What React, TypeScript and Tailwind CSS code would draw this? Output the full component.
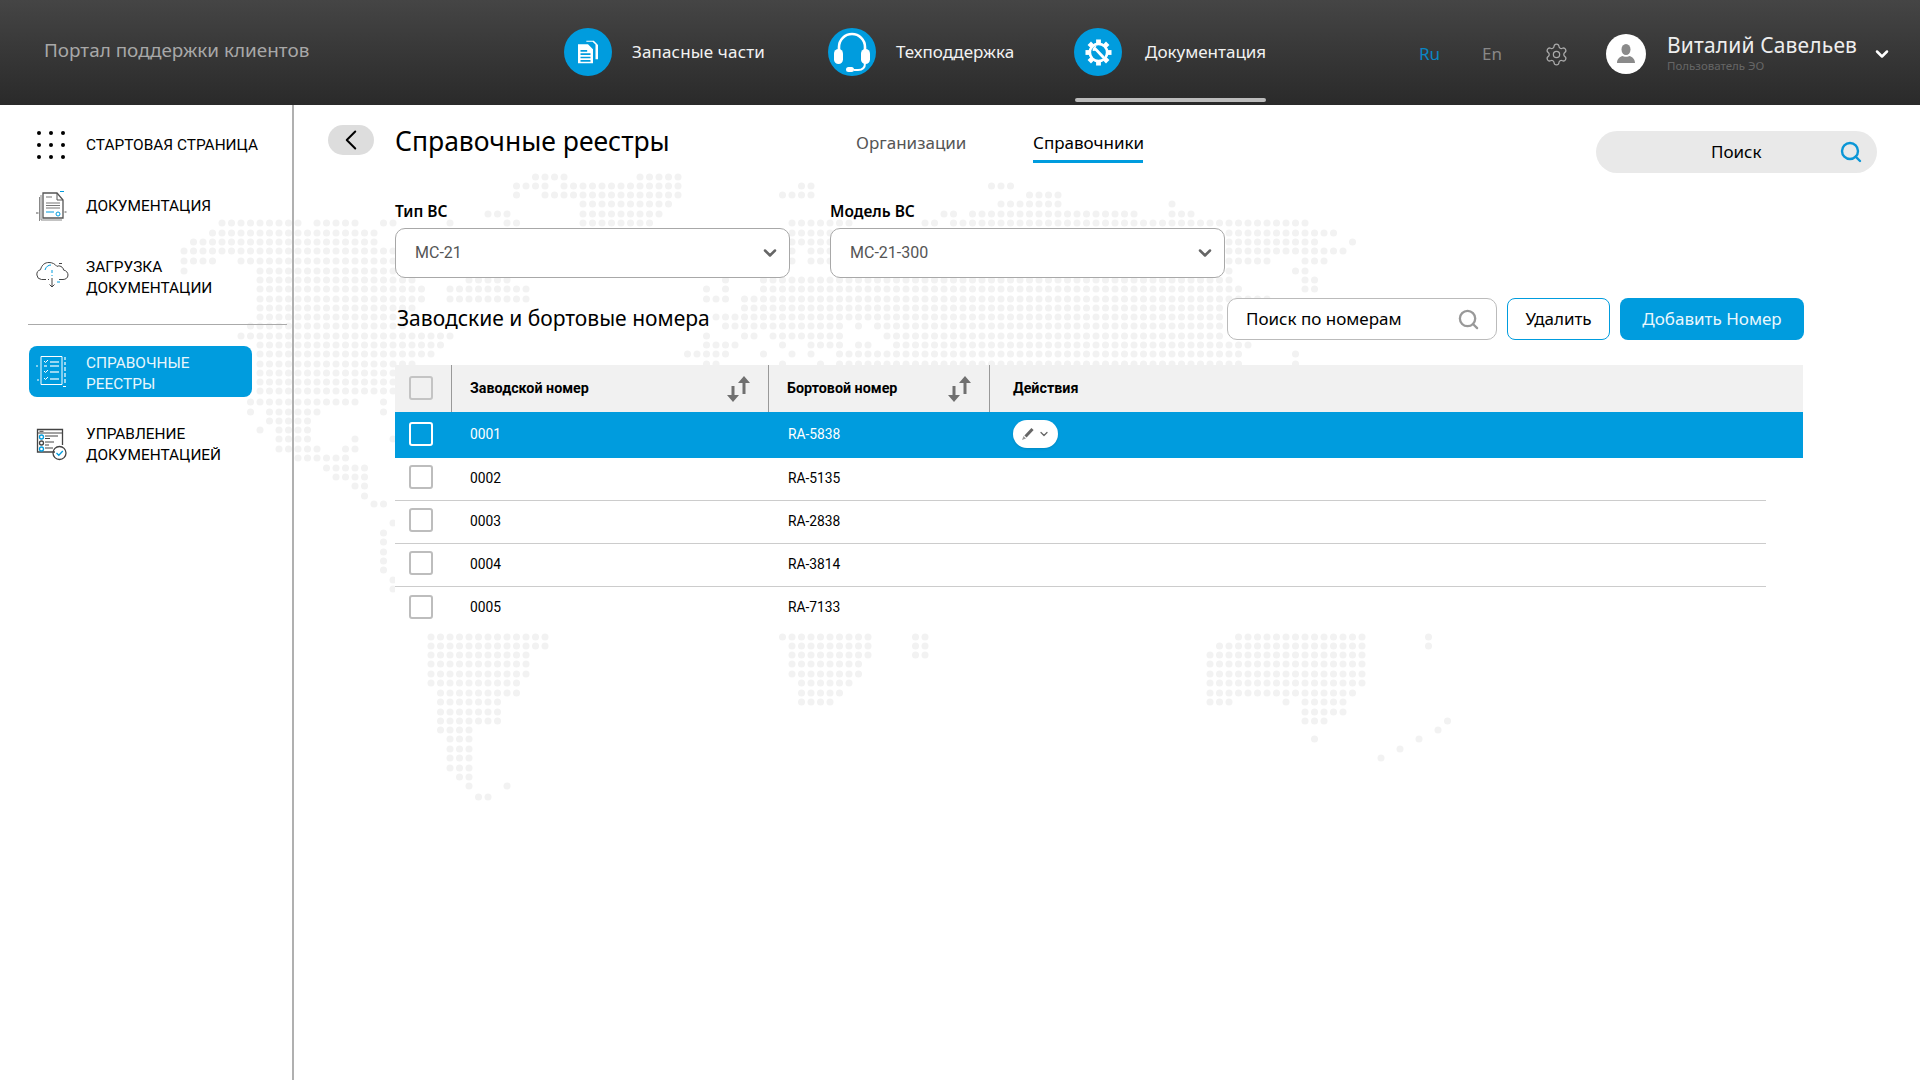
import { ChevronDown, ChevronLeft, Search, Settings } from "lucide-react";

const BLUE = "#009cde";

// y, then pairs of x start / x end of each run of dots
const MAP_ROWS: number[][] = [
  [177, 533, 571, 637, 684],
  [186, 514, 544, 561, 684, 805, 815, 993, 1014],
  [195, 514, 514, 542, 684, 785, 815, 1029, 1062],
  [204, 579, 674, 1002, 1062, 1173, 1173],
  [214, 486, 506, 579, 664, 947, 956, 974, 1136, 1173, 1192],
  [223, 221, 299, 316, 356, 384, 394, 449, 449, 504, 524, 579, 656, 796, 851, 928, 937, 955, 1307],
  [233, 212, 378, 796, 1333],
  [242, 194, 376, 796, 1314, 1351, 1351],
  [251, 184, 235, 241, 395, 796, 796, 813, 1343],
  [261, 184, 215, 241, 395, 796, 796, 813, 1268, 1303, 1324],
  [271, 186, 186, 261, 395, 1230, 1230, 1295, 1305],
  [280, 261, 413, 467, 508, 722, 722, 767, 1230, 1305, 1314],
  [289, 261, 423, 449, 526, 702, 712, 730, 730, 767, 1240, 1305, 1314],
  [299, 261, 423, 449, 526, 702, 702, 720, 730, 749, 1268],
  [308, 261, 413, 740, 1225],
  [317, 261, 405, 720, 1225],
  [326, 251, 405, 730, 843, 861, 861, 880, 1222],
  [336, 241, 453, 702, 712, 740, 759, 777, 777, 787, 843, 889, 1222],
  [345, 261, 443, 702, 741, 787, 787, 815, 843, 861, 870, 899, 1249],
  [354, 261, 433, 692, 731, 767, 767, 796, 796, 815, 815, 842, 1238, 1293, 1293],
  [364, 261, 414, 702, 722, 786, 786, 825, 825, 842, 1238, 1294, 1294],
  [373, 261, 395],
  [382, 261, 395],
  [391, 261, 395],
  [402, 251, 358, 384, 384],
  [412, 251, 251, 271, 320, 384, 384],
  [421, 271, 310],
  [430, 261, 261, 279, 310],
  [439, 279, 310, 354, 354, 393, 393],
  [449, 279, 320, 344, 354],
  [458, 299, 348],
  [468, 326, 366],
  [477, 336, 366],
  [486, 356, 366],
  [496, 366, 366],
  [504, 374, 391],
  [523, 391, 391],
  [533, 382, 391],
  [542, 382, 391],
  [552, 382, 391],
  [561, 382, 391],
  [570, 382, 391],
  [580, 391, 391],
  [589, 391, 391],
  [637, 429, 553, 786, 872, 919, 928, 1236, 1361, 1426, 1426],
  [646, 429, 553, 796, 872, 919, 928, 1219, 1361, 1433, 1433],
  [655, 429, 525, 796, 872, 919, 928, 1209, 1370],
  [664, 429, 525, 796, 862, 1209, 1370],
  [674, 429, 525, 796, 862, 1209, 1370],
  [683, 429, 516, 806, 853, 1209, 1370],
  [693, 440, 516, 806, 843, 1209, 1360],
  [702, 440, 505, 806, 834, 1209, 1228, 1284, 1284, 1303, 1351],
  [712, 440, 497, 1303, 1342],
  [721, 440, 497, 1303, 1332, 1443, 1443],
  [730, 440, 477, 1434, 1434],
  [739, 449, 468, 1312, 1312, 1415, 1415],
  [749, 449, 468, 1396, 1406],
  [758, 449, 468, 1379, 1387],
  [768, 449, 477],
  [777, 459, 468],
  [786, 468, 468, 505, 505],
  [797, 477, 487],
];

function DotMap() {
  const dots: [number, number][] = [];
  for (const row of MAP_ROWS) {
    for (let i = 1; i < row.length; i += 2) {
      const start = 184 + Math.round((row[i] - 184) / 9.5) * 9.5;
      dots.push([start, row[0]]);
      for (let x = start + 9.5; x <= row[i + 1] + 1; x += 9.5) dots.push([x, row[0]]);
    }
  }
  return (
    <svg className="absolute left-0 top-0 z-0" width="1920" height="1080">
      {dots.map(([x, y], i) => (
        <circle key={i} cx={x} cy={y} r="3.500" fill="#f2f2f2" />
      ))}
    </svg>
  );
}

function PartsIcon() {
  return (
    <svg width="22" height="25" viewBox="0 0 26 30" fill="white">
      <path d="M11 1h9l5 5v17h-3V5.500L18.500 2H11z" />
      <path fillRule="evenodd" d="M1 5h12l6 6v17H1zM4 12v2h8v-2zM4 16v2h12v-2zM4 20v2h12v-2zM4 24v2h12v-2z" />
    </svg>
  );
}

function HeadsetIcon() {
  return (
    <svg width="40" height="44" viewBox="0 0 40 44" fill="none">
      <path d="M7 23v-6a13 13 0 0 1 26 0v6" stroke="white" strokeWidth="2.600" />
      <rect x="2" y="19" width="9" height="15" rx="4.500" fill="white" />
      <rect x="29" y="19" width="9" height="15" rx="4.500" fill="white" />
      <path d="M33 33c0 5-3 7-7 7h-4" stroke="white" strokeWidth="2" />
      <rect x="14" y="37" width="8" height="5" rx="2.500" fill="white" />
    </svg>
  );
}

function ToolGearIcon() {
  const teeth = [0, 45, 90, 135, 180, 225, 270, 315];
  return (
    <svg width="27" height="27" viewBox="0 0 28 28" fill="none">
      <circle cx="14" cy="14" r="9" stroke="white" strokeWidth="2.800" />
      {teeth.map((a) => (
        <rect key={a} x="11.500" y="0.500" width="5" height="4.500" fill="white" transform={`rotate(${a} 14 14)`} />
      ))}
      <path d="M11 10.500l7.500 8" stroke="white" strokeWidth="3" strokeLinecap="round" />
      <path d="M8 12.500a4.500 4.500 0 0 1 4-5.500l-1.500 3 2 2z" fill="white" />
    </svg>
  );
}

function DotsIcon() {
  const cells = [0, 1, 2, 3, 4, 5, 6, 7, 8];
  return (
    <div className="grid grid-cols-3 gap-x-[8px] gap-y-[8px] w-[28px] ml-[2px]">
      {cells.map((c) => (
        <span key={c} className="w-[4px] h-[4px] rounded-full bg-black mx-auto" />
      ))}
    </div>
  );
}

function DocIcon() {
  return (
    <svg width="32" height="32" viewBox="0 0 32 32" fill="none" stroke="#555" strokeWidth="1" className="ml-[1px]">
      <path d="M7 3h14l6 7v18H7z" strokeWidth="1.300" />
      <path d="M5 5v25h21M3.500 7v24" stroke="#888" />
      <path d="M21 3v7h6" />
      <path d="M10 7h6M10 13h14M10 15.500h14M10 18h14" stroke="#777" strokeWidth="1.200" />
      <path d="M10 22h8M24 1.500h4" stroke={BLUE} />
      <circle cx="22" cy="24" r="2" stroke={BLUE} />
      <path d="M0 23h2.500M28.500 22h2" stroke="#555" />
    </svg>
  );
}

function CloudIcon() {
  return (
    <svg width="34" height="28" viewBox="0 0 34 28" fill="none" stroke="#444" strokeWidth="1" className="-mt-[6px]">
      <path d="M11 18.500H6.500a5 5 0 0 1-1-9.800C7 3.500 10 1.500 14 1.500c3.500 0 6 1.500 8 4 1-.8 2.500-.8 4 0 1.500.8 2.500 2 2.500 3.500 2.800.5 4.500 2.800 4.500 5 0 3-2.500 4.500-5 4.500h-4" />
      <path d="M10 9c1-3.500 3.500-5 6-5" stroke={BLUE} />
      <path d="M17 9v3M17 14v1" stroke={BLUE} />
      <path d="M17 17v9M14.500 23.500l2.500 2.500 2.500-2.500" />
      <path d="M14 18.500h-1" />
      <path d="M22 21h3" stroke={BLUE} />
      <path d="M24 2.500h3" />
    </svg>
  );
}

function ListIcon() {
  return (
    <svg width="34" height="34" viewBox="0 0 34 34" fill="none" stroke="white" strokeWidth="1">
      <path d="M6 1.500h21v28H6z" />
      <path d="M30 2v3M30 7v3M30 12v4M30 18v4M30 24v4M28 31.500h3M1 11h2M2 25h2" strokeWidth="1.200" />
      <path d="M9 6l1.500 1.500L13 5M9 16l1.500 1.500L13 15M9 23l1.500 1.500L13 22" />
      <path d="M15 7h9M15 11h9M15 17h9M15 24h9M9 11h3" strokeWidth="1.400" opacity="0.800" />
    </svg>
  );
}

function ManageIcon() {
  return (
    <svg width="32" height="34" viewBox="0 0 32 34" fill="none" stroke="#444" strokeWidth="1.300">
      <path d="M20 24H2.500V1.500h25V17" />
      <path d="M2.500 5h25M4.500 3.300h4" strokeWidth="1" />
      <circle cx="6.500" cy="9" r="2" stroke={BLUE} />
      <circle cx="6.500" cy="15" r="2" />
      <circle cx="6.500" cy="21" r="2" stroke={BLUE} />
      <path d="M10 8h13M10 10.500h5M10 14h9M10 17h4M10 20h8" strokeWidth="1" />
      <circle cx="24.500" cy="25" r="6.500" />
      <path d="M21.500 25l2.300 2.300 4-4.300" stroke={BLUE} />
    </svg>
  );
}

function UserIcon() {
  return (
    <svg width="20" height="22" viewBox="0 0 20 22" fill="#8a8a8a">
      <ellipse cx="10" cy="6.500" rx="4.500" ry="5.500" />
      <path d="M1 20c0-4.500 3.500-6.500 5.500-7 1 1 6 1 7 0 2 .5 5.500 2.500 5.500 7z" />
    </svg>
  );
}

function SortIcon() {
  return (
    <svg width="24" height="26" viewBox="0 0 24 26" fill="#707070">
      <path d="M17 0l6 7h-4.500v11h-3V7H11z" />
      <path d="M6 26l-6-7h4.500V10h3v9H12z" />
    </svg>
  );
}

function PencilIcon() {
  return (
    <svg width="14" height="14" viewBox="0 0 14 14" fill="none">
      <path d="M4.500 9.500L11.500 2" stroke="#666" strokeWidth="3" />
      <path d="M1 13l1.500-4 2.500 2.500z" fill="#999" />
    </svg>
  );
}

function NavItem({ icon, label, width }: { icon: React.ReactNode; label: string; width: string }) {
  return (
    <div className={`flex items-center ${width}`}>
      <div className="w-[48px] h-[48px] rounded-full bg-[#009cde] flex items-center justify-center shrink-0">{icon}</div>
      <span className="text-[17px] text-[#f2f2f2] whitespace-nowrap">{label}</span>
    </div>
  );
}

function Header() {
  return (
    <header className="relative h-[105px] bg-linear-to-b from-[#454545] to-[#2a2a2a] flex items-center">
      <div className="w-[564px] pl-[44px] text-[18.900px] text-[#a8a8a8] -mt-[5px]">Портал поддержки клиентов</div>
      <div className="w-[264px] -mt-[1px]">
        <NavItem icon={<PartsIcon />} label="Запасные части" width="gap-[20px] tracking-[0.150px]" />
      </div>
      <div className="w-[246px] -mt-[1px]">
        <NavItem icon={<HeadsetIcon />} label="Техподдержка" width="gap-[20px]" />
      </div>
      <div className="w-[345px] -mt-[1px]">
        <NavItem icon={<ToolGearIcon />} label="Документация" width="gap-[23px]" />
      </div>
      <span className="absolute left-[1075px] top-[98px] w-[191px] h-[4px] rounded-sm bg-[#bbbbbb]" />
      <span className="text-[17px] text-[#0b86c4] w-[63px] mt-[3px]">Ru</span>
      <span className="text-[17px] text-[#888888] w-[62px] mt-[3px]">En</span>
      <Settings size={25} strokeWidth={1.200} className="text-[#aaaaaa] mt-[3px]" />
      <div className="ml-[37px] w-[40px] h-[40px] rounded-full bg-white flex items-center justify-center mt-[2px]">
        <UserIcon />
      </div>
      <div className="ml-[21px] w-[207px] mt-[1px]">
        <div className="text-[21px] leading-[25px] tracking-[0.150px] text-[#eeeeee] whitespace-nowrap">Виталий Савельев</div>
        <div className="text-[11.500px] leading-[14px] mt-[1px] text-[#666666]">Пользователь ЭО</div>
      </div>
      <ChevronDown size={20} strokeWidth={3} className="text-white ml-[-2px] mt-[3px]" />
    </header>
  );
}

function SideItem({ icon, children, active, className }: { icon: React.ReactNode; children: React.ReactNode; active?: boolean; className?: string }) {
  return (
    <div
      className={`ml-[29px] w-[223px] flex items-center pl-[6px] gap-[17px] font-['Roboto'] text-[15.400px] leading-[21px] ${
        active ? "bg-[#009cde] text-[#e8f6fc] rounded-[8px] h-[51px]" : "text-black h-[46px]"
      } ${className ?? ""}`}
    >
      <div className="w-[34px] shrink-0 flex justify-start">{icon}</div>
      <div className={`whitespace-nowrap ${active ? "pt-[5px]" : ""}`}>{children}</div>
    </div>
  );
}

function Sidebar() {
  return (
    <aside className="w-[294px] h-[975px] border-r-2 border-[#b0b0b0] shrink-0">
      <SideItem icon={<DotsIcon />} className="mt-[17px]">СТАРТОВАЯ СТРАНИЦА</SideItem>
      <SideItem icon={<DocIcon />} className="mt-[15px]">ДОКУМЕНТАЦИЯ</SideItem>
      <SideItem icon={<CloudIcon />} className="mt-[26px]">ЗАГРУЗКА<br />ДОКУМЕНТАЦИИ</SideItem>
      <div className="ml-[28px] w-[259px] border-t border-[#aaaaaa] mt-[23px]" />
      <SideItem icon={<ListIcon />} active className="mt-[21px]">СПРАВОЧНЫЕ<br />РЕЕСТРЫ</SideItem>
      <SideItem icon={<ManageIcon />} className="mt-[25px]">УПРАВЛЕНИЕ<br />ДОКУМЕНТАЦИЕЙ</SideItem>
    </aside>
  );
}

function SelectBox({ label, value }: { label: string; value: string }) {
  return (
    <div className="w-[395px]">
      <div className="h-[20px] leading-[20px] text-[15.500px] font-semibold text-black">{label}</div>
      <div className="mt-[7px] h-[50px] bg-white border border-[#a8a8a8] rounded-[10px] flex items-center justify-between pl-[19px] pr-[9px]">
        <span className="font-['Roboto'] text-[16px] text-[#555555]">{value}</span>
        <ChevronDown size={20} strokeWidth={3} className="text-[#666666]" />
      </div>
    </div>
  );
}

const GRID = "grid grid-cols-[56px_317px_221px_1fr]";

const ROWS = [
  ["0001", "RA-5838"],
  ["0002", "RA-5135"],
  ["0003", "RA-2838"],
  ["0004", "RA-3814"],
  ["0005", "RA-7133"],
];

function NumbersTable() {
  return (
    <div className="mt-[25px] w-[1408px] font-['Roboto']">
      <div className={`${GRID} h-[47px] bg-[#f1f1f1] text-[14.300px] font-bold text-black items-stretch`}>
        <div className="flex items-center pl-[14px] pb-[1px]">
          <span className="w-[24px] h-[24px] rounded-[3px] border-2 border-[#c4c4c4]" />
        </div>
        <div className="border-l border-[#999999] flex items-center justify-between pl-[18px] pr-[17px]">
          <span>Заводской номер</span>
          <SortIcon />
        </div>
        <div className="border-l border-[#999999] flex items-center justify-between pl-[18px] pr-[17px]">
          <span>Бортовой номер</span>
          <SortIcon />
        </div>
        <div className="border-l border-[#999999] flex items-center pl-[23px]">Действия</div>
      </div>
      {ROWS.map(([factory, board], i) =>
        i === 0 ? (
          <div key={factory} className={`${GRID} h-[46px] bg-[#009cde] text-white text-[13.800px] items-center`}>
            <div className="pl-[14px] flex pb-[2px]">
              <span className="w-[24px] h-[24px] rounded-[3px] border-2 border-white" />
            </div>
            <div className="pl-[19px] pb-[2px]">{factory}</div>
            <div className="pl-[20px] pb-[2px]">{board}</div>
            <div className="pl-[24px] pb-[2px]">
              <div className="w-[45px] h-[28px] rounded-full bg-white flex items-center justify-center gap-[3px] shadow-sm">
                <PencilIcon />
                <ChevronDown size={12} strokeWidth={2.500} className="text-[#666666]" />
              </div>
            </div>
          </div>
        ) : (
          <div key={factory} className="bg-white h-[43px]">
            <div className={`${GRID} h-[43px] w-[1371px] text-[13.800px] text-black items-center ${i < 4 ? "border-b border-[#cccccc]" : ""}`}>
              <div className="pl-[14px] flex pb-[4px]">
                <span className="w-[24px] h-[24px] rounded-[3px] border-2 border-[#bdbdbd]" />
              </div>
              <div className="pl-[19px] pb-[2px]">{factory}</div>
              <div className="pl-[20px] pb-[2px]">{board}</div>
              <div />
            </div>
          </div>
        ),
      )}
    </div>
  );
}

function Main() {
  return (
    <main className="flex-1 pl-[101px] pr-[43px]">
      <div className="flex items-start pt-[20px]">
        <button className="-ml-[67px] w-[46px] h-[30px] rounded-[15px] bg-[#dddddd] flex items-center justify-center shrink-0">
          <ChevronLeft size={34} strokeWidth={1.400} className="text-black" />
        </button>
        <h1 className="ml-[21px] w-[280px] text-[26.500px] leading-[32px] text-black whitespace-nowrap">Справочные реестры</h1>
        <span className="ml-[181px] w-[109px] mt-[6px] text-[17px] leading-[24px] text-[#555555] whitespace-nowrap">Организации</span>
        <div className="ml-[68px] w-[110px] mt-[6px] h-[32px] border-b-[3px] border-[#009cde] text-[17px] leading-[24px] text-black whitespace-nowrap">
          Справочники
        </div>
        <div className="ml-auto mt-[6px] w-[281px] h-[42px] bg-[#e9e9e9] rounded-[21px] flex items-center pr-[14px]">
          <span className="flex-1 pl-[115px] text-[17px] text-black">Поиск</span>
          <Search size={24} strokeWidth={2.400} className="text-[#0b96d6]" />
        </div>
      </div>
      <div className="flex gap-[40px] mt-[28px]">
        <SelectBox label="Тип ВС" value="МС-21" />
        <SelectBox label="Модель ВС" value="МС-21-300" />
      </div>
      <div className="flex items-center w-[1409px] mt-[20px]">
        <h2 className="text-[21px] leading-[42px] text-black pl-[2px] -mt-[2px] whitespace-nowrap">Заводские и бортовые номера</h2>
        <div className="ml-auto w-[270px] h-[42px] bg-white border border-[#bbbbbb] rounded-[10px] flex items-center justify-between pl-[18px] pr-[16px]">
          <span className="text-[17px] text-black whitespace-nowrap">Поиск по номерам</span>
          <Search size={23} strokeWidth={2.400} className="text-[#999999]" />
        </div>
        <button className="ml-[10px] w-[103px] h-[42px] bg-white border border-[#009cde] rounded-[8px] text-[17px] text-black">Удалить</button>
        <button className="ml-[10px] w-[184px] h-[42px] bg-[#009cde] rounded-[8px] text-[17px] text-[#eaf7fd] whitespace-nowrap">Добавить Номер</button>
      </div>
      <NumbersTable />
    </main>
  );
}

export default function App() {
  return (
    <div className="relative w-[1920px] h-[1080px] overflow-hidden bg-white font-['Noto_Sans',sans-serif]">
      <DotMap />
      <div className="relative z-10">
        <Header />
        <div className="flex">
          <Sidebar />
          <Main />
        </div>
      </div>
    </div>
  );
}
